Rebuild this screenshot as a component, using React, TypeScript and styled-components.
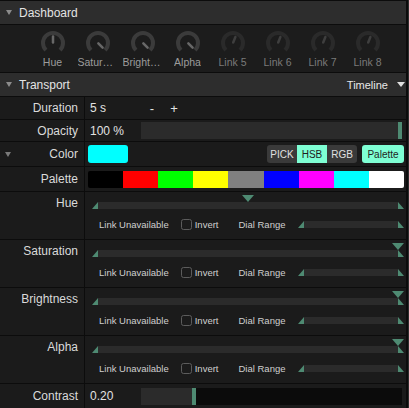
import React from "react";
import styled, { createGlobalStyle } from "styled-components";

const ACCENT = "#4e8a72";
const MINT = "#7effd4";
const LINE = "#0c0c0c";
const ROW_BG = "#1b1b1b";
const TRACK = "#2b2b2b";

const GlobalStyle = createGlobalStyle`
  * { box-sizing: border-box; }
  html, body { margin: 0; padding: 0; background: #2e2e2e; }
  body { font-family: "Liberation Sans", Arial, sans-serif; color: #d8d8d8; }
`;

const Panel = styled.div`
  width: 408px;
  height: 408px;
  overflow: hidden;
  background: ${LINE};
  border-right: 2px solid ${LINE};
  padding-top: 1px;
  display: flex;
  flex-direction: column;
  gap: 1px;
`;

const SectionHeader = styled.div`
  height: 23px;
  flex: none;
  background: #2d2d2d;
  display: flex;
  align-items: center;
  padding-left: 6px;
  font-size: 12px;
  color: #e4e4e4;
`;

const Caret = styled.span<{ $w: number; $h: number; $color: string }>`
  width: 0;
  height: 0;
  flex: none;
  border-left: ${(p) => p.$w / 2}px solid transparent;
  border-right: ${(p) => p.$w / 2}px solid transparent;
  border-top: ${(p) => p.$h}px solid ${(p) => p.$color};
`;

const HeaderTitle = styled.span`
  margin-left: 7px;
  flex: 1;
`;

const HeaderMenu = styled.span`
  display: flex;
  align-items: center;
  gap: 9px;
  font-size: 11px;
  color: #e8e8e8;
  padding-right: 1px;
`;

const KnobStrip = styled.div`
  height: 47px;
  flex: none;
  background: #1c1c1c;
  display: flex;
  padding: 5px 0 0 30px;
`;

const KnobCell = styled.div`
  width: 45px;
  display: flex;
  flex-direction: column;
  align-items: center;
`;

const KnobLabel = styled.div<{ $dim?: boolean }>`
  max-width: 40px;
  white-space: nowrap;
  overflow: hidden;
  text-overflow: ellipsis;
  font-size: 10.5px;
  line-height: 12px;
  color: ${(p) => (p.$dim ? "#7a7a7a" : "#9c9c9c")};
`;

const KnobSvg = styled.svg`
  display: block;
  flex: none;
`;

const Row = styled.div<{ $h: number }>`
  height: ${(p) => p.$h}px;
  flex: none;
  display: grid;
  grid-template-columns: 84px 1fr;
  column-gap: 1px;
`;

const LabelCell = styled.div<{ $top?: boolean }>`
  background: ${ROW_BG};
  display: flex;
  align-items: ${(p) => (p.$top ? "flex-start" : "center")};
  justify-content: flex-end;
  gap: 4px;
  padding: ${(p) => (p.$top ? "4px 6px 0 5px" : "0 6px 0 5px")};
  font-size: 12px;
  line-height: 14px;
  color: #dadada;
`;

const LabelCaret = styled(Caret)`
  margin-right: auto;
`;

const ValueCell = styled.div<{ $pl: number; $column?: boolean }>`
  background: ${ROW_BG};
  min-width: 0;
  display: flex;
  flex-direction: ${(p) => (p.$column ? "column" : "row")};
  align-items: ${(p) => (p.$column ? "stretch" : "center")};
  padding: ${(p) => (p.$column ? "3px" : "0")} 2px 0 ${(p) => p.$pl}px;
`;

const ValueText = styled.span`
  width: 51px;
  flex: none;
  font-size: 12px;
  color: #e2e2e2;
`;

const StepButton = styled.span`
  width: 22px;
  text-align: center;
  font-size: 13px;
  color: #e2e2e2;
`;

const LevelTrack = styled.div`
  flex: 1;
  height: 17px;
  margin-right: 2px;
  background: #0b0b0b;
  display: flex;
`;

const LevelFill = styled.div`
  background: ${TRACK};
  flex: none;
`;

const LevelHandle = styled.div`
  width: 4px;
  flex: none;
  background: ${ACCENT};
`;

const Swatch = styled.div<{ $color: string }>`
  width: 40px;
  height: 18px;
  border-radius: 3px;
  background: ${(p) => p.$color};
  margin-right: auto;
`;

const Segmented = styled.div`
  display: flex;
  border-radius: 3px;
  overflow: hidden;
`;

const SegButton = styled.span<{ $active?: boolean }>`
  width: 30px;
  height: 18px;
  display: flex;
  align-items: center;
  justify-content: center;
  font-size: 10px;
  background: ${(p) => (p.$active ? MINT : "#3a3a3a")};
  color: ${(p) => (p.$active ? "#1e1e1e" : "#e0e0e0")};
`;

const PaletteButton = styled.span`
  width: 42px;
  height: 18px;
  margin-left: 5px;
  border-radius: 3px;
  display: flex;
  align-items: center;
  justify-content: center;
  font-size: 10px;
  background: ${MINT};
  color: #1e1e1e;
`;

const PaletteStrip = styled.div`
  flex: 1;
  height: 17px;
  display: flex;
  border-radius: 2px;
  overflow: hidden;
`;

const Chip = styled.div<{ $color: string }>`
  flex: 1;
  background: ${(p) => p.$color};
`;

const MainSlider = styled.div`
  position: relative;
  padding-top: 7px;
`;

const ValueMarker = styled.span`
  position: absolute;
  top: 0;
  width: 0;
  height: 0;
  border-left: 6px solid transparent;
  border-right: 6px solid transparent;
  border-top: 7px solid ${ACCENT};
`;

const RangeTrack = styled.div<{ $grow?: boolean }>`
  display: flex;
  height: 7px;
  flex: ${(p) => (p.$grow ? 1 : "none")};
`;

const MinMark = styled.span`
  width: 0;
  height: 0;
  flex: none;
  border-left: 6px solid transparent;
  border-bottom: 7px solid ${ACCENT};
`;

const MaxMark = styled.span`
  width: 0;
  height: 0;
  flex: none;
  border-right: 6px solid transparent;
  border-bottom: 7px solid ${ACCENT};
`;

const TrackBody = styled.div`
  flex: 1;
  background: ${TRACK};
`;

const LinkLine = styled.div`
  display: flex;
  align-items: center;
  height: 14px;
  margin-top: 8px;
  padding-left: 7px;
  font-size: 9.5px;
  color: #cfcfcf;
  white-space: nowrap;
`;

const LinkText = styled.span<{ $mr: number }>`
  margin-right: ${(p) => p.$mr}px;
`;

const CheckBox = styled.span`
  width: 11px;
  height: 11px;
  flex: none;
  border: 1px solid #5c5c5c;
  border-radius: 2.5px;
  margin-right: 3px;
`;

function Knob({ value, dim }: { value: number; dim?: boolean }) {
  const cx = 14;
  const cy = 13;
  const r = 10;
  const pt = (deg: number, rad: number) => {
    const a = (deg * Math.PI) / 180;
    return [cx + rad * Math.sin(a), cy - rad * Math.cos(a)];
  };
  const [x1, y1] = pt(-135, r);
  const [x2, y2] = pt(135, r);
  const ang = -135 + 270 * value;
  const [n1x, n1y] = pt(ang, 0.5);
  const [n2x, n2y] = pt(ang, 6.5);
  return (
    <KnobSvg width={28} height={26} viewBox="0 0 28 26">
      <path
        d={`M ${x1} ${y1} A ${r} ${r} 0 1 1 ${x2} ${y2}`}
        fill="none"
        stroke={dim ? "#2a2a2a" : "#3b3b3b"}
        strokeWidth={4}
      />
      <line
        x1={n1x}
        y1={n1y}
        x2={n2x}
        y2={n2y}
        stroke={dim ? "#3e3e3e" : "#686868"}
        strokeWidth={2.5}
        strokeLinecap="round"
      />
    </KnobSvg>
  );
}

const knobs = [
  { label: "Hue", value: 0.5 },
  { label: "Saturation", value: 1 },
  { label: "Brightness", value: 1 },
  { label: "Alpha", value: 1 },
  { label: "Link 5", value: 0.58, dim: true },
  { label: "Link 6", value: 0.58, dim: true },
  { label: "Link 7", value: 0.58, dim: true },
  { label: "Link 8", value: 0.58, dim: true },
];

const palette = [
  "#000000",
  "#ff0000",
  "#00ff00",
  "#ffff00",
  "#808080",
  "#0000ff",
  "#ff00ff",
  "#00ffff",
  "#ffffff",
];

const channels = [
  { label: "Hue", value: 0.5 },
  { label: "Saturation", value: 1 },
  { label: "Brightness", value: 1 },
  { label: "Alpha", value: 1 },
];

function Level({ value }: { value: number }) {
  return (
    <LevelTrack>
      <LevelFill style={{ width: `calc((100% - 4px) * ${value})` }} />
      <LevelHandle />
    </LevelTrack>
  );
}

function ChannelRow({ label, value }: { label: string; value: number }) {
  return (
    <Row $h={47}>
      <LabelCell $top>{label}</LabelCell>
      <ValueCell $pl={7} $column>
        <MainSlider>
          <ValueMarker style={{ left: `calc((100% - 12px) * ${value})` }} />
          <RangeTrack>
            <MinMark />
            <TrackBody />
            <MaxMark />
          </RangeTrack>
        </MainSlider>
        <LinkLine>
          <LinkText $mr={12}>Link Unavailable</LinkText>
          <CheckBox />
          <LinkText $mr={20}>Invert</LinkText>
          <LinkText $mr={13}>Dial Range</LinkText>
          <RangeTrack $grow>
            <MinMark />
            <TrackBody />
            <MaxMark />
          </RangeTrack>
        </LinkLine>
      </ValueCell>
    </Row>
  );
}

export default function App() {
  return (
    <>
      <GlobalStyle />
      <Panel>
        <SectionHeader>
          <Caret $w={7} $h={5} $color="#8c8c8c" />
          <HeaderTitle>Dashboard</HeaderTitle>
        </SectionHeader>
        <KnobStrip>
          {knobs.map((k) => (
            <KnobCell key={k.label}>
              <Knob value={k.value} dim={k.dim} />
              <KnobLabel $dim={k.dim}>{k.label}</KnobLabel>
            </KnobCell>
          ))}
        </KnobStrip>
        <SectionHeader>
          <Caret $w={7} $h={5} $color="#8c8c8c" />
          <HeaderTitle>Transport</HeaderTitle>
          <HeaderMenu>
            Timeline
            <Caret $w={8} $h={5} $color="#e0e0e0" />
          </HeaderMenu>
        </SectionHeader>
        <Row $h={22}>
          <LabelCell>Duration</LabelCell>
          <ValueCell $pl={5}>
            <ValueText>5 s</ValueText>
            <StepButton>-</StepButton>
            <StepButton>+</StepButton>
          </ValueCell>
        </Row>
        <Row $h={21}>
          <LabelCell>Opacity</LabelCell>
          <ValueCell $pl={5}>
            <ValueText>100 %</ValueText>
            <Level value={1} />
          </ValueCell>
        </Row>
        <Row $h={24}>
          <LabelCell>
            <LabelCaret $w={7} $h={5} $color="#7a7a7a" />
            Color
          </LabelCell>
          <ValueCell $pl={3}>
            <Swatch $color="#00ffff" />
            <Segmented>
              <SegButton>PICK</SegButton>
              <SegButton $active>HSB</SegButton>
              <SegButton>RGB</SegButton>
            </Segmented>
            <PaletteButton>Palette</PaletteButton>
          </ValueCell>
        </Row>
        <Row $h={24}>
          <LabelCell>Palette</LabelCell>
          <ValueCell $pl={3}>
            <PaletteStrip>
              {palette.map((c) => (
                <Chip key={c} $color={c} />
              ))}
            </PaletteStrip>
          </ValueCell>
        </Row>
        {channels.map((c) => (
          <ChannelRow key={c.label} label={c.label} value={c.value} />
        ))}
        <Row $h={24}>
          <LabelCell>Contrast</LabelCell>
          <ValueCell $pl={5}>
            <ValueText>0.20</ValueText>
            <Level value={0.2} />
          </ValueCell>
        </Row>
      </Panel>
    </>
  );
}
